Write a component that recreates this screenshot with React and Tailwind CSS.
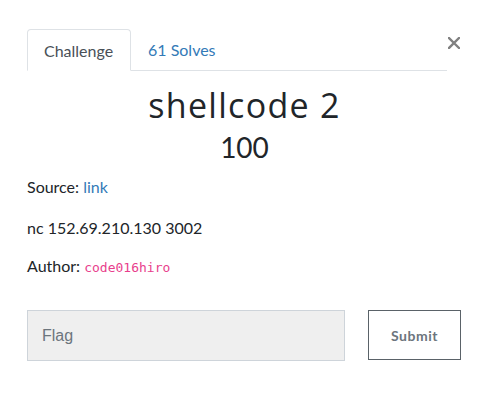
import React from 'react';

const CloseIcon = () => (
  <svg width="12" height="12" viewBox="0 0 12 12" fill="none">
    <path d="M1 1L11 11M11 1L1 11" stroke="#808080" strokeWidth="2.4" strokeLinecap="square" />
  </svg>
);

const App = () => {
  return (
    <div className="w-[489px] h-[406px] bg-white font-['Lato',sans-serif] text-[#212529]">
      {/* Tabs */}
      <div className="flex items-start pt-[29px] pl-[27px]">
        <ul className="flex w-[420px] h-[42px] border-b border-[#dee2e6]">
          <li className="h-[42px] w-[104px] pl-4 pt-[9px] border border-[#dee2e6] border-b-white rounded-t-[4px] text-[16px] text-[#495057]">
            Challenge
          </li>
          <li className="h-[41px] pl-[17px] pt-[9px] text-[16px] text-[#337ab7]">61 Solves</li>
        </ul>
        <button className="ml-[1px] mt-[8px]">
          <CloseIcon />
        </button>
      </div>

      {/* Title */}
      <div className="text-center pt-[12px]">
        <h3 className="text-[34px] leading-[44px] tracking-[1.3px] font-['Open_Sans',sans-serif]">shellcode 2</h3>
        <h4 className="text-[28px] leading-[36px] mt-[2px]">100</h4>
      </div>

      {/* Description */}
      <div className="px-[27px] pt-[10px] text-[16px] leading-[24px]">
        <p>
          Source: <span className="text-[#337ab7]">link</span>
        </p>
        <p className="mt-[17px]">nc 152.69.210.130 3002</p>
        <p className="mt-[14px]">
          Author: <code className="text-[13px] text-[#e83e8c] font-['DejaVu_Sans_Mono',monospace]">code016hiro</code>
        </p>
      </div>

      {/* Flag form */}
      <div className="flex items-start gap-[23px] pl-[27px] pt-[30px]">
        <input
          placeholder="Flag"
          className="w-[318px] h-[51px] bg-[#efefef] border border-[#ced4da] px-[14px] text-[16px] font-['Liberation_Sans',sans-serif] placeholder:text-[#6c757d] outline-none"
        />
        <button className="w-[93px] h-[50px] border border-[#5a6268] text-[14px] font-bold tracking-[0.5px] text-[#6c757d]">
          Submit
        </button>
      </div>
    </div>
  );
};

export default App;
